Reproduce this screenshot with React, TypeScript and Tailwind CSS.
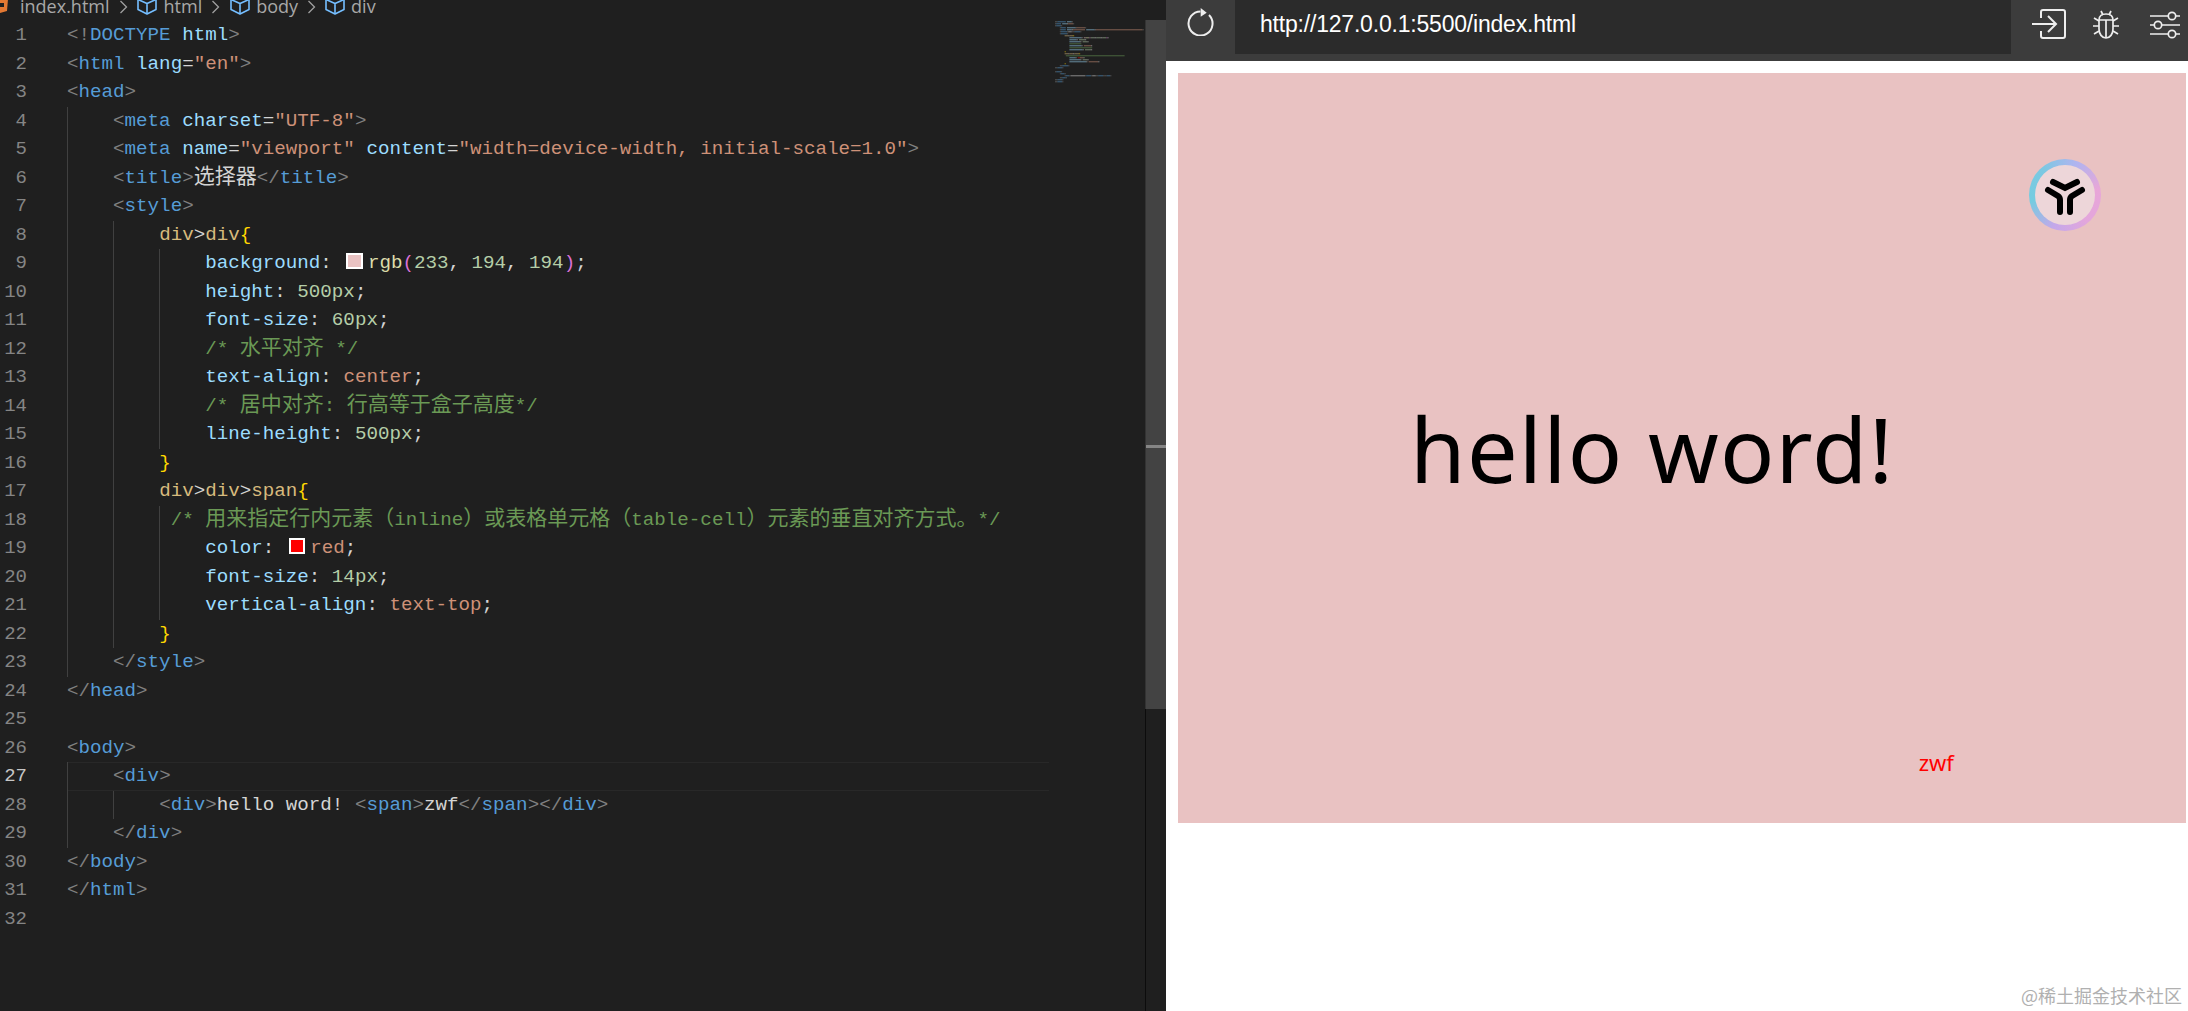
type Seg = [string, string];

const C = {
  br: '#808080',
  tag: '#569cd6',
  attr: '#9cdcfe',
  str: '#ce9178',
  sel: '#d7ba7d',
  brace: '#ffd700',
  com: '#6a9955',
  num: '#b5cea8',
  fn: '#dcdcaa',
  par: '#da70d6',
  txt: '#d4d4d4',
};

const lines: Seg[][] = [
  [['<!', C.br], ['DOCTYPE', C.tag], [' ', C.txt], ['html', C.attr], ['>', C.br]],
  [['<', C.br], ['html', C.tag], [' ', C.txt], ['lang', C.attr], ['=', C.txt], ['"en"', C.str], ['>', C.br]],
  [['<', C.br], ['head', C.tag], ['>', C.br]],
  [['    ', C.txt], ['<', C.br], ['meta', C.tag], [' ', C.txt], ['charset', C.attr], ['=', C.txt], ['"UTF-8"', C.str], ['>', C.br]],
  [['    ', C.txt], ['<', C.br], ['meta', C.tag], [' ', C.txt], ['name', C.attr], ['=', C.txt], ['"viewport"', C.str], [' ', C.txt], ['content', C.attr], ['=', C.txt], ['"width=device-width, initial-scale=1.0"', C.str], ['>', C.br]],
  [['    ', C.txt], ['<', C.br], ['title', C.tag], ['>', C.br], ['选择器', C.txt], ['</', C.br], ['title', C.tag], ['>', C.br]],
  [['    ', C.txt], ['<', C.br], ['style', C.tag], ['>', C.br]],
  [['        ', C.txt], ['div', C.sel], ['>', C.txt], ['div', C.sel], ['{', C.brace]],
  [['            ', C.txt], ['background', C.attr], [':', C.txt], [' ', C.txt], ['#swatch', 'rgb(233,194,194)'], ['rgb', C.fn], ['(', C.par], ['233', C.num], [', ', C.txt], ['194', C.num], [', ', C.txt], ['194', C.num], [')', C.par], [';', C.txt]],
  [['            ', C.txt], ['height', C.attr], [':', C.txt], [' ', C.txt], ['500px', C.num], [';', C.txt]],
  [['            ', C.txt], ['font-size', C.attr], [':', C.txt], [' ', C.txt], ['60px', C.num], [';', C.txt]],
  [['            ', C.txt], ['/* 水平对齐 */', C.com]],
  [['            ', C.txt], ['text-align', C.attr], [':', C.txt], [' ', C.txt], ['center', C.str], [';', C.txt]],
  [['            ', C.txt], ['/* 居中对齐: 行高等于盒子高度*/', C.com]],
  [['            ', C.txt], ['line-height', C.attr], [':', C.txt], [' ', C.txt], ['500px', C.num], [';', C.txt]],
  [['        ', C.txt], ['}', C.brace]],
  [['        ', C.txt], ['div', C.sel], ['>', C.txt], ['div', C.sel], ['>', C.txt], ['span', C.sel], ['{', C.brace]],
  [['         ', C.txt], ['/* 用来指定行内元素（inline）或表格单元格（table-cell）元素的垂直对齐方式。*/', C.com]],
  [['            ', C.txt], ['color', C.attr], [':', C.txt], [' ', C.txt], ['#swatch', '#ff0000'], ['red', C.str], [';', C.txt]],
  [['            ', C.txt], ['font-size', C.attr], [':', C.txt], [' ', C.txt], ['14px', C.num], [';', C.txt]],
  [['            ', C.txt], ['vertical-align', C.attr], [':', C.txt], [' ', C.txt], ['text-top', C.str], [';', C.txt]],
  [['        ', C.txt], ['}', C.brace]],
  [['    ', C.txt], ['</', C.br], ['style', C.tag], ['>', C.br]],
  [['</', C.br], ['head', C.tag], ['>', C.br]],
  [],
  [['<', C.br], ['body', C.tag], ['>', C.br]],
  [['    ', C.txt], ['<', C.br], ['div', C.tag], ['>', C.br]],
  [['        ', C.txt], ['<', C.br], ['div', C.tag], ['>', C.br], ['hello word! ', C.txt], ['<', C.br], ['span', C.tag], ['>', C.br], ['zwf', C.txt], ['</', C.br], ['span', C.tag], ['>', C.br], ['</', C.br], ['div', C.tag], ['>', C.br]],
  [['    ', C.txt], ['</', C.br], ['div', C.tag], ['>', C.br]],
  [['</', C.br], ['body', C.tag], ['>', C.br]],
  [['</', C.br], ['html', C.tag], ['>', C.br]],
  [],
];

// indent guides per line, as the number of levels drawn
const guides = [0, 0, 0, 1, 1, 1, 1, 2, 3, 3, 3, 3, 3, 3, 3, 2, 2, 3, 3, 3, 3, 2, 1, 0, 0, 0, 1, 2, 1, 0, 0, 0];

// latin runs at the mono size, CJK runs a little bigger like the editor's fallback font
function CodeText({ text, color }: { text: string; color: string }) {
  const parts = text.split(/([\u3000-\u9fff\uff00-\uffef]+)/);
  return (
    <span style={{ color }}>
      {parts.map((p, i) =>
        i % 2 === 1 ? (
          <span key={i} className="text-[21px] leading-none font-['Noto_Sans_CJK_SC',sans-serif]">{p}</span>
        ) : (
          p
        ),
      )}
    </span>
  );
}

function CodeLine({ segs, level, active }: { segs: Seg[]; level: number; active: boolean }) {
  return (
    <div className={`relative h-[28.53px] leading-[28.53px] whitespace-pre ${active ? 'shadow-[inset_0_1px_0_#282828,inset_0_-1px_0_#282828]' : ''}`}>
      {level > 0 && <span className="absolute top-0 bottom-0 left-0 w-px bg-[#404040]" />}
      {level > 1 && <span className="absolute top-0 bottom-0 left-[46px] w-px bg-[#404040]" />}
      {level > 2 && <span className="absolute top-0 bottom-0 left-[92px] w-px bg-[#404040]" />}
      {segs.map(([text, color], i) =>
        text === '#swatch' ? (
          <span key={i} className="inline-block w-[16.5px] h-[16.5px] ml-[3px] mr-[5px] align-[-1px] border-2 border-white" style={{ backgroundColor: color }} />
        ) : (
          <CodeText key={i} text={text} color={color} />
        ),
      )}
    </div>
  );
}

// tiny code overview, built from the same tokens
function Minimap() {
  return (
    <svg width="90" height="66" className="shrink-0 opacity-55">
      {lines.map((segs, row) => {
        let x = 0;
        return segs.map(([text, color], i) => {
          const w = text === '#swatch' ? 2 : text.length * 1.2;
          const rect = text.trim() ? <rect key={`${row}-${i}`} x={x} y={row * 2} width={w} height={1.4} fill={color} opacity={0.75} /> : null;
          x += w;
          return rect;
        });
      })}
    </svg>
  );
}

function Cube() {
  return (
    <svg width="22" height="22" viewBox="0 0 22 22" fill="none" stroke="#75beff" strokeWidth="1.6" strokeLinejoin="round" className="shrink-0 block">
      <path d="M11 2l9 3.5v10L11 20l-9-4.5v-10z" />
      <path d="M2 5.5l9 4 9-4M11 9.5V20" />
    </svg>
  );
}

function Chevron() {
  return (
    <svg width="9" height="14" viewBox="0 0 9 14" fill="none" stroke="#a0a0a0" strokeWidth="1.3" className="shrink-0 block">
      <path d="M1.5 1l6 6-6 6" />
    </svg>
  );
}

function Crumbs() {
  return (
    <div className="h-[21px] shrink-0 overflow-hidden flex items-center text-[18px] text-[#a8a8a8] font-['Open_Sans',sans-serif] whitespace-nowrap">
      <svg width="8" height="16" viewBox="0 0 8 16" className="shrink-0 -mt-[8px]">
        <path d="M0 0h8l-1 12-7 2z" fill="#e37933" />
        <path d="M0 4h4v4H0z" fill="#1f1f1f" />
      </svg>
      <span className="ml-[12px] -mt-[8px]">index.html</span>
      <span className="ml-[9px] -mt-[8px]"><Chevron /></span>
      <span className="ml-[8px] -mt-[12px]"><Cube /></span>
      <span className="ml-[6px] -mt-[8px]">html</span>
      <span className="ml-[9px] -mt-[8px]"><Chevron /></span>
      <span className="ml-[9px] -mt-[12px]"><Cube /></span>
      <span className="ml-[5px] -mt-[8px]">body</span>
      <span className="ml-[9px] -mt-[8px]"><Chevron /></span>
      <span className="ml-[8px] -mt-[12px]"><Cube /></span>
      <span className="ml-[5px] -mt-[8px]">div</span>
    </div>
  );
}

function Editor() {
  return (
    <div className="w-[1166px] h-full shrink-0 bg-[#1f1f1f] flex flex-col overflow-hidden">
      <Crumbs />
      <div className="flex-1 flex min-h-0">
        <div className="w-[67px] shrink-0 font-['Liberation_Mono',monospace] text-[19px]">
          {lines.map((_, i) => (
            <div key={i} className={`h-[28.53px] leading-[28.53px] w-[27px] text-right ${i === 26 ? 'text-[#c6c6c6]' : 'text-[#858585]'}`}>
              {i + 1}
            </div>
          ))}
        </div>
        <div className="w-[982px] shrink-0 font-['Liberation_Mono',monospace] text-[19.2px]">
          {lines.map((segs, i) => (
            <CodeLine key={i} segs={segs} level={guides[i]} active={i === 26} />
          ))}
        </div>
        <div className="flex-1 flex min-w-0">
          <div className="w-[96px] shrink-0 pl-[6px]">
            <Minimap />
          </div>
          <div className="w-[21px] shrink-0 flex flex-col -mt-px">
            <div className="h-[689px] shrink-0 bg-[#434343] border-l border-[#333333] relative">
              <span className="absolute left-0 right-0 top-[425px] h-[3px] bg-[#858585]" />
            </div>
            <div className="flex-1 border-l border-[#0c0c0c]" />
          </div>
        </div>
      </div>
    </div>
  );
}

function ToolIcons() {
  return (
    <div className="flex items-center">
      <svg width="36" height="30" viewBox="0 0 36 30" fill="none" stroke="#eeeeee" strokeWidth="2" className="ml-[20px]">
        <path d="M10 9V3a2 2 0 0 1 2-2h20a2 2 0 0 1 2 2v24a2 2 0 0 1-2 2H12a2 2 0 0 1-2-2v-5" />
        <path d="M1 15h24M17 7l8 8-8 8" />
      </svg>
      <svg width="28" height="30" viewBox="0 0 28 30" fill="none" stroke="#eeeeee" strokeWidth="1.7" className="ml-[25px]">
        <path d="M7 11c0-4 3-6 7-6s7 2 7 6v9c0 5-3 9-7 9s-7-4-7-9z" />
        <path d="M7 11h14M14 11v18M9 2l2 4M19 2l-2 4M7 12l-5-3M21 12l5-3M7 17H1M21 17h6M7 22l-5 3M21 22l5 3" />
      </svg>
      <svg width="32" height="30" viewBox="0 0 32 30" fill="none" stroke="#eeeeee" strokeWidth="1.7" className="ml-[29px]">
        <path d="M1 7h18M27 7h4M1 16h4M13 16h18M1 25h18M27 25h4" />
        <circle cx="23" cy="7" r="3.7" />
        <circle cx="9" cy="16" r="3.7" />
        <circle cx="23" cy="25" r="3.7" />
      </svg>
    </div>
  );
}

function Logo() {
  return (
    <div className="absolute left-[851px] top-[86px] w-[72px] h-[72px] rounded-full bg-[conic-gradient(from_200deg,#c4a8ea,#74cce0,#7cc8e2,#b0b4f0,#e8a6d8,#e3a6dc,#c4a8ea)] p-[6px] leading-none">
      <div className="w-full h-full rounded-full bg-[#edd6d9] flex items-center justify-center">
        <svg width="42" height="42" viewBox="0 0 42 42" stroke="#000000" strokeWidth="6" strokeLinecap="round" fill="none">
          <path d="M9 8l12 6 12-6" />
          <path d="M4 16l10 6c1.5 1 2 2 2 4v12" />
          <path d="M38 16l-10 6c-1.5 1-2 2-2 4v12" />
        </svg>
      </div>
    </div>
  );
}

function Preview() {
  return (
    <div className="flex-1 h-full flex flex-col min-w-0 bg-white relative">
      <div className="h-[61px] shrink-0 bg-[#3c3c3c] flex">
        <div className="w-[69px] shrink-0 flex items-center justify-center pb-[19px]">
          <svg width="30" height="30" viewBox="0 0 30 30" fill="none" stroke="#eeeeee" strokeWidth="2">
            <path d="M14.5 5.5A12 12 0 1 0 23 9" />
            <path d="M14.7 2l6 4.7-6 4z" fill="#eeeeee" stroke="none" />
          </svg>
        </div>
        <div className="w-[776px] h-[54px] shrink-0 bg-[#2b2b2b] flex items-center pl-[25px] pb-[6px] text-[23px] text-white font-['Liberation_Sans',sans-serif] tracking-[-0.2px]">
          http://127.0.0.1:5500/index.html
        </div>
        <div className="pb-[13px] flex items-center"><ToolIcons /></div>
      </div>
      <div className="pl-[12px] pr-[2px] pt-[12px]">
        <div className="relative h-[750px] bg-[rgb(233,194,194)] text-center text-[90px] tracking-[1.2px] leading-[750px] text-black font-['Noto_Sans',sans-serif]">
          hello word! <span className="text-[22px] tracking-normal text-[#ff0000] align-text-top">zwf</span>
          <Logo />
        </div>
      </div>
      <div className="absolute right-[6px] bottom-[7px] text-[18px] leading-none text-[#b0b0b0] font-['Noto_Sans_CJK_SC',sans-serif]">
        @稀土掘金技术社区
      </div>
    </div>
  );
}

export default function App() {
  return (
    <div className="w-[2188px] h-[1011px] flex overflow-hidden">
      <Editor />
      <Preview />
    </div>
  );
}
